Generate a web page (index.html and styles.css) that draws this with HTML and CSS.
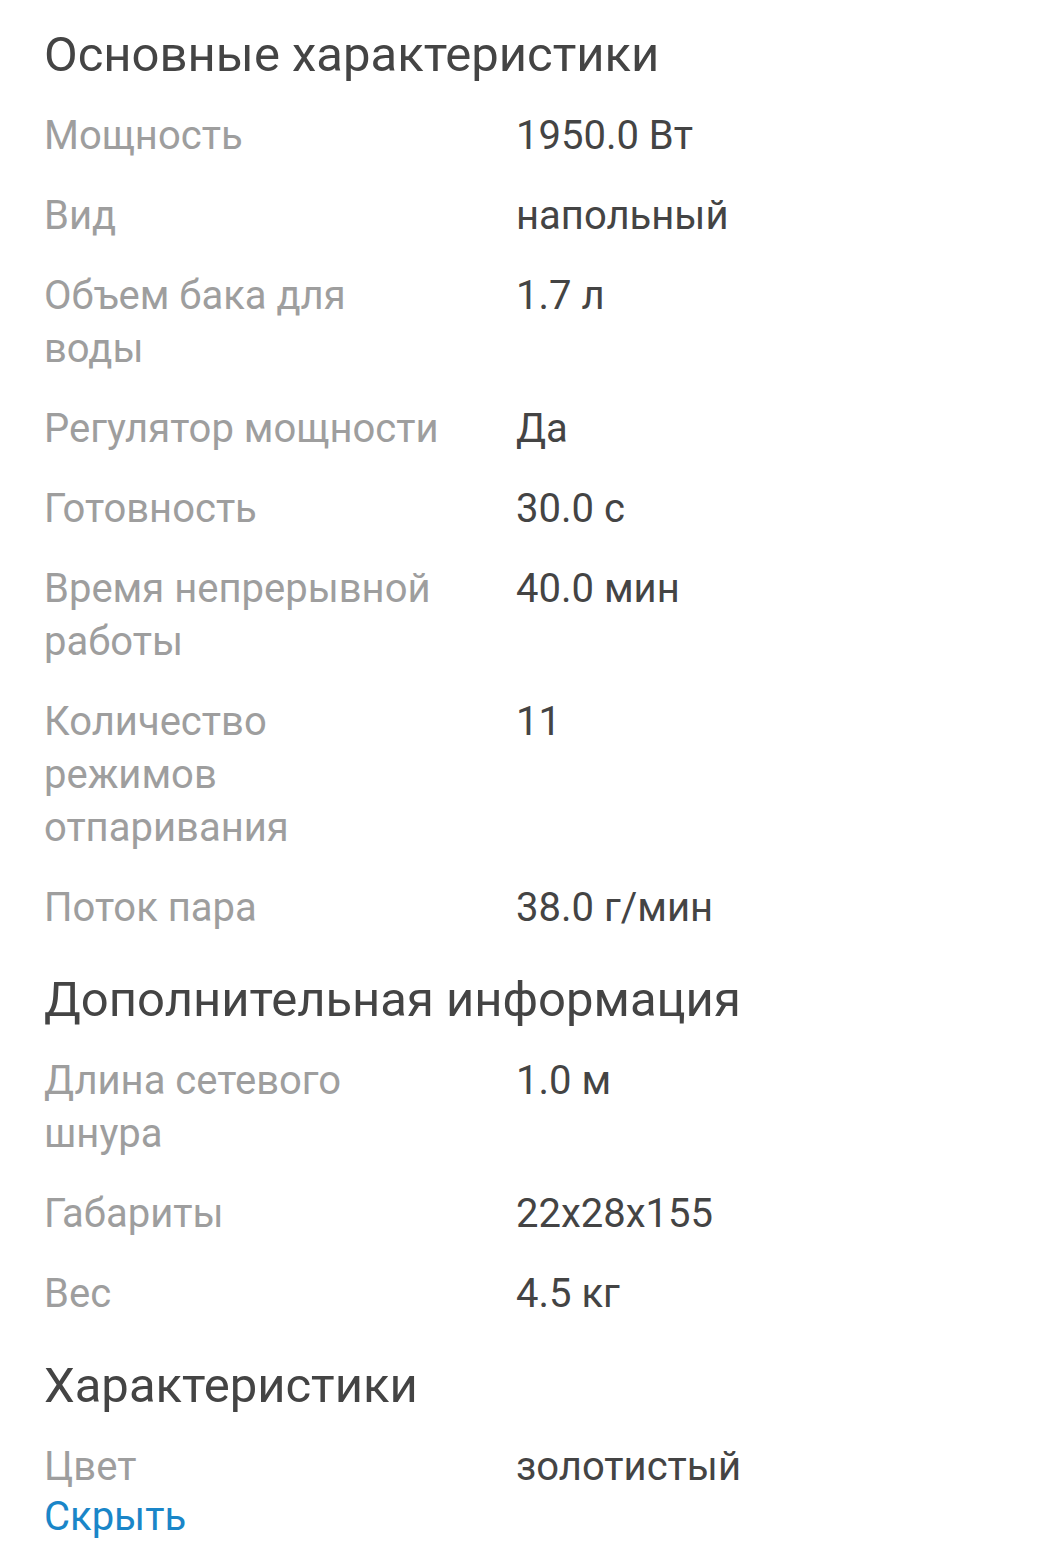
FILE: index.html
```html
<!DOCTYPE html>
<html lang="ru">
<head>
<meta charset="utf-8">
<link rel="stylesheet" href="styles.css">
</head>
<body>
<div class="page">
  <section class="group">
    <h2 class="group-title">Основные характеристики</h2>
    <dl class="specs">
      <div class="row"><dt>Мощность</dt><dd>1950.0 Вт</dd></div>
      <div class="row"><dt>Вид</dt><dd>напольный</dd></div>
      <div class="row"><dt>Объем бака для воды</dt><dd>1.7 л</dd></div>
      <div class="row"><dt>Регулятор мощности</dt><dd>Да</dd></div>
      <div class="row"><dt>Готовность</dt><dd>30.0 с</dd></div>
      <div class="row"><dt>Время непрерывной работы</dt><dd>40.0 мин</dd></div>
      <div class="row"><dt>Количество режимов отпаривания</dt><dd>11</dd></div>
      <div class="row"><dt>Поток пара</dt><dd>38.0 г/мин</dd></div>
    </dl>
  </section>
  <section class="group">
    <h2 class="group-title">Дополнительная информация</h2>
    <dl class="specs">
      <div class="row"><dt>Длина сетевого шнура</dt><dd>1.0 м</dd></div>
      <div class="row"><dt>Габариты</dt><dd>22x28x155</dd></div>
      <div class="row"><dt>Вес</dt><dd>4.5 кг</dd></div>
    </dl>
  </section>
  <section class="group">
    <h2 class="group-title">Характеристики</h2>
    <dl class="specs">
      <div class="row last"><dt>Цвет</dt><dd>золотистый</dd></div>
    </dl>
  </section>
  <a class="toggle" href="#">Скрыть</a>
</div>
</body>
</html>
```

FILE: styles.css
```css
html, body {
  margin: 0;
  padding: 0;
  background: #ffffff;
}
body {
  font-family: Roboto, "Noto Sans", "Liberation Sans", sans-serif;
  color: #444444;
}
.page {
  padding: 25px 44px 0 44px;
}
.group + .group {
  margin-top: 9px;
}
.group-title {
  margin: 0 0 24px 0;
  font-size: 49px;
  line-height: 60px;
  font-weight: 400;
  color: #444444;
}
.specs {
  margin: 0;
}
.row {
  display: grid;
  grid-template-columns: 402px 1fr;
  column-gap: 70px;
  padding-bottom: 27px;
  font-size: 40px;
  line-height: 53px;
}
.row.last {
  padding-bottom: 0;
}
.row dt {
  color: #9e9e9e;
}
.row dd {
  margin: 0;
  color: #444444;
}
.toggle {
  display: inline-block;
  font-size: 40px;
  line-height: 48px;
  color: #1a86c8;
  text-decoration: none;
}
```
